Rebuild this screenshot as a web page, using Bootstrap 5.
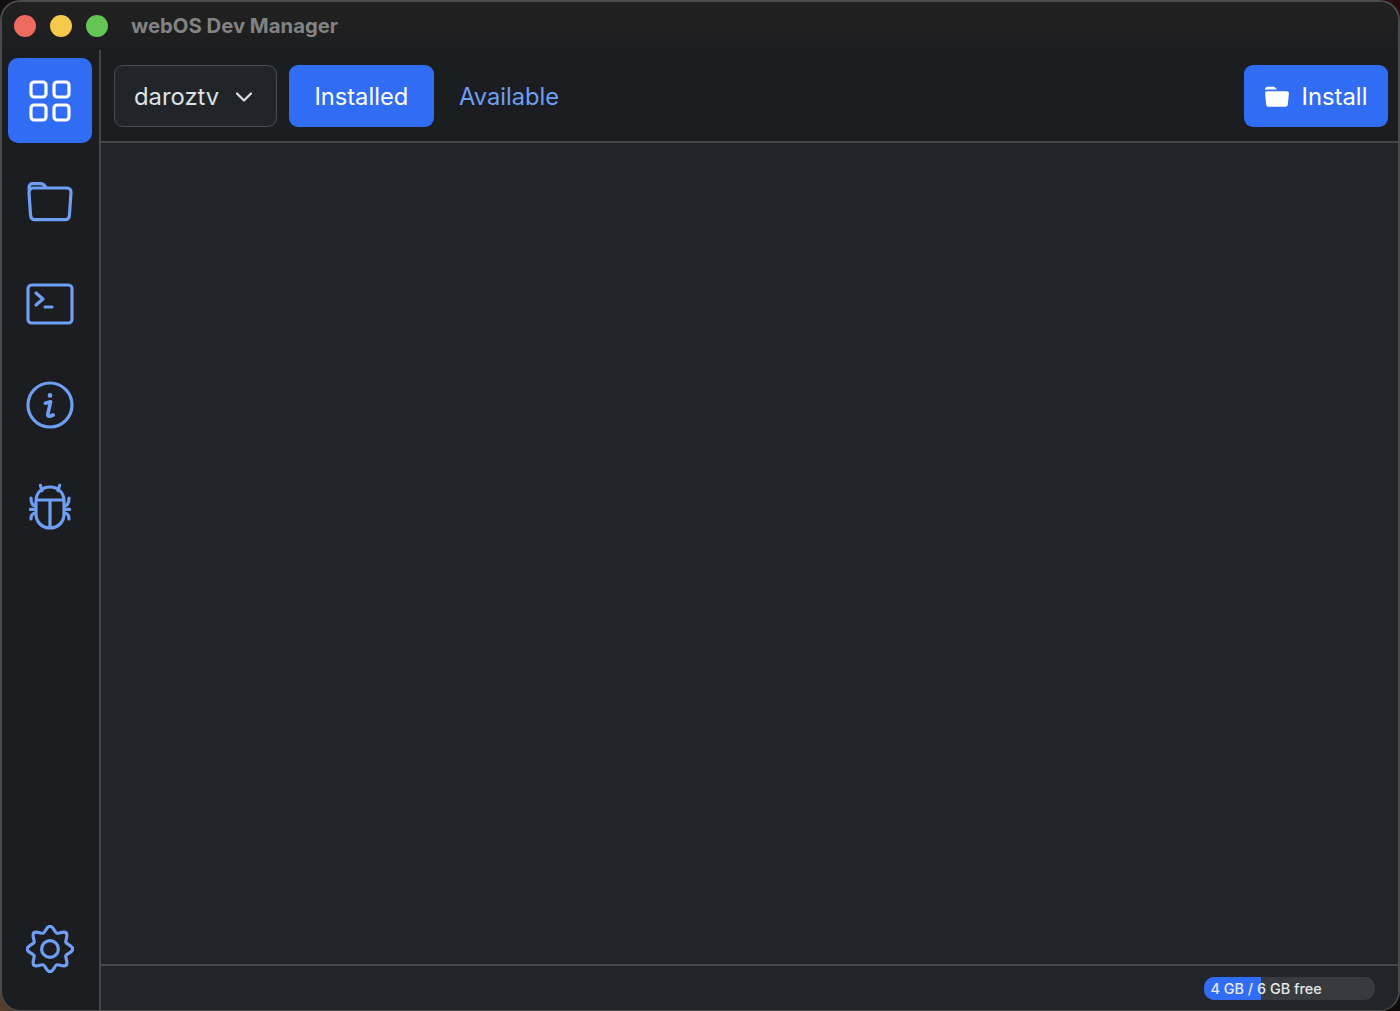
<!DOCTYPE html>
<html lang="en" data-bs-theme="dark">
<head>
  <meta charset="UTF-8" />
  <title>webOS Dev Manager</title>
  <link rel="stylesheet" href="https://cdn.jsdelivr.net/npm/bootstrap@5.3.0/dist/css/bootstrap.min.css" />
  <style>
    html, body { height: 100%; }
    body {
      background: linear-gradient(45deg, #5a4030 0, #2a211c 3%, #0c0a0a 50%, #2a0c10 100%);
      font-family: Inter, "Liberation Sans", sans-serif;
      overflow: hidden;
    }
    .app-window {
      width: 1400px;
      height: 1011px;
      background: #1b1d20;
      border: 2px solid #4a4b4c;
      border-bottom-width: 1px;
      border-radius: 20px;
      overflow: hidden;
    }
    .title-bar {
      height: 48px;
      flex: none;
      padding-left: 12px;
      background: linear-gradient(#212121, #1d1e20);
    }
    .traffic { width: 22px; height: 22px; border-radius: 50%; margin-right: 14px; }
    .traffic-red { background: #ee6a5f; }
    .traffic-yellow { background: #f5c94a; }
    .traffic-green { background: #62c554; }
    .title-text { margin-left: 9px; font-size: 20.3px; font-weight: 700; color: #838383; }

    .sidebar { width: 99px; flex: none; border-right: 2px solid #43474b; padding: 8px 7px 0 6px; }
    .side-link {
      height: 85px;
      margin-bottom: 16.5px;
      border-radius: 10px;
      color: #6f9ff5;
    }
    .side-link.active { background: #316cf4; color: #fff; }
    .side-link svg { width: 48px; height: 48px; fill: none; stroke: currentColor; stroke-width: 1.6; stroke-linecap: round; stroke-linejoin: round; }
    .side-link.side-bottom { margin-bottom: 19px; }

    .tool-bar { height: 93px; flex: none; padding: 15px 10px 0 13px; background: #1b1d20; border-bottom: 2px solid #43474b; }
    .device-select {
      width: 163px;
      height: 62px;
      padding: 1px 22px 0 19px;
      background: #212529;
      border: 1.5px solid #4a4e53;
      border-radius: 9px;
      color: #dee2e6;
      font-size: 23.8px;
    }
    .device-select svg { width: 20px; height: 20px; fill: none; stroke: #dee2e6; stroke-width: 2.2; stroke-linecap: round; stroke-linejoin: round; }
    .nav-pills { margin-left: 12px; }
    .nav-pills .nav-link {
      height: 62px;
      padding: 1px 25.4px 0;
      font-size: 23.7px;
      line-height: 62px;
      border-radius: 9px;
      color: #6f9ff5;
    }
    .nav-pills .nav-link.active { background: #316cf4; color: #fff; }
    .btn-install {
      height: 62px;
      width: 144px;
      padding: 1px 1px 0 0;
      gap: 12px;
      background: #316cf4;
      border: 0;
      border-radius: 9px;
      font-size: 23.8px;
      color: #fff;
    }
    .btn-install svg { width: 26px; height: 26px; fill: #fff; }

    .content-area { background: #212529; }
    .status-bar { height: 46px; flex: none; padding: 11px 23px 0 0; background: #212529; border-top: 2px solid #43474b; }
    .storage {
      width: 171px;
      height: 23px;
      background: #373b3f;
      border-radius: 10px;
    }
    .storage .progress-bar { background: #316cf4; }
    .storage-label {
      left: 6.500px;
      top: 0;
      line-height: 24px;
      font-size: 14.4px;
      font-weight: 500;
      color: #e6e8ea;
      white-space: nowrap;
    }
  </style>
</head>
<body>
  <div class="app-window d-flex flex-column">
    <div class="title-bar d-flex align-items-center">
      <span class="traffic traffic-red"></span>
      <span class="traffic traffic-yellow"></span>
      <span class="traffic traffic-green"></span>
      <span class="title-text">webOS Dev Manager</span>
    </div>

    <div class="d-flex flex-grow-1 overflow-hidden">
      <nav class="sidebar d-flex flex-column">
        <a class="side-link active d-flex align-items-center justify-content-center" href="#">
          <svg viewBox="0 0 24 24"><rect x="2.5" y="2.5" width="7.5" height="7.5" rx="1.6"/><rect x="14" y="2.5" width="7.5" height="7.5" rx="1.6"/><rect x="2.5" y="14" width="7.5" height="7.5" rx="1.6"/><rect x="14" y="14" width="7.5" height="7.5" rx="1.6"/></svg>
        </a>
        <a class="side-link d-flex align-items-center justify-content-center" href="#">
          <svg viewBox="0 0 24 24"><path d="M1.700 6.800L1.500 4.700C1.500 3.500 2.300 2.800 3.400 2.800H7.300C8 2.800 8.500 3 9 3.500L10.300 5H20.400C21.800 5 22.700 6 22.500 7.300L21.700 18.800C21.600 20 20.700 20.800 19.600 20.800H4.400C3.300 20.800 2.400 20 2.300 18.800L1.500 7.300C1.400 6 2.300 5 3.600 5H10.300"/></svg>
        </a>
        <a class="side-link d-flex align-items-center justify-content-center" href="#">
          <svg viewBox="0 0 24 24"><rect x="1" y="2.500" width="22" height="19" rx="1.800"/><path d="M5 6.500l3.500 3-3.500 3M9.500 13.500h3.500"/></svg>
        </a>
        <a class="side-link d-flex align-items-center justify-content-center" href="#">
          <svg viewBox="0 0 24 24"><circle cx="12" cy="12" r="11"/><circle cx="12" cy="7.200" r=".7" fill="currentColor" stroke-width="1"/><path d="M9.700 11.100L12.300 10.400L10.900 16.600C10.700 17.700 11.700 17.900 13.600 17" stroke-width="1.800"/></svg>
        </a>
        <a class="side-link d-flex align-items-center justify-content-center" href="#">
          <svg viewBox="0 0 24 24"><path d="M12 2C7.800 2 5 5 5 9v6.500C5 19.500 8 22.500 12 22.500s7-3 7-7V9C19 5 16.200 2 12 2zM5 8.500h14M12 8.500V22.500M8 3.800L7.200 1.200M16 3.800L16.800 1.200M5 11.500C3.500 11.500 2.500 10 2.500 7.500M19 11.500C20.500 11.500 21.500 10 21.500 7.500M5 13.200H2.200M19 13.200h2.800M5 15C3.500 15 2.500 16 2.500 18M19 15c1.500 0 2.500 1 2.500 3"/></svg>
        </a>
        <a class="side-link side-bottom d-flex align-items-center justify-content-center mt-auto" href="#">
          <svg viewBox="0 0 24 24">
            <circle cx="12" cy="12" r="4.200"/>
            <path id="gear-lobe" d="M12 .6C13.700 .6 14.275 3.634 15.291 4.055C16.307 4.476 18.859 2.737 20.061 3.939"/>
            <use href="#gear-lobe" transform="rotate(45 12 12)"/>
            <use href="#gear-lobe" transform="rotate(90 12 12)"/>
            <use href="#gear-lobe" transform="rotate(135 12 12)"/>
            <use href="#gear-lobe" transform="rotate(180 12 12)"/>
            <use href="#gear-lobe" transform="rotate(225 12 12)"/>
            <use href="#gear-lobe" transform="rotate(270 12 12)"/>
            <use href="#gear-lobe" transform="rotate(315 12 12)"/>
          </svg>
        </a>
      </nav>

      <main class="d-flex flex-column flex-grow-1">
        <div class="tool-bar d-flex align-items-start">
          <div class="device-select d-flex align-items-center justify-content-between">
            <span>daroztv</span>
            <svg viewBox="0 0 20 20"><path d="M3 6.500l7 7 7-7"/></svg>
          </div>
          <ul class="nav nav-pills">
            <li class="nav-item"><a class="nav-link active" href="#">Installed</a></li>
            <li class="nav-item"><a class="nav-link" href="#">Available</a></li>
          </ul>
          <button class="btn btn-install d-flex align-items-center justify-content-center ms-auto" type="button">
            <svg viewBox="0 0 24 24"><path d="M1 5.500C1 3.600 2 2.500 3.500 2.500h5c.8 0 1.400.3 2 .9L12 5H3c-.8 0-1.400.2-2 .7zM1 8.500c0-1 .8-1.700 1.800-1.700h18.400c1 0 1.800.7 1.800 1.700L22 19c-.1 1.200-1 2-2.200 2H4.200C3 21 2.100 20.200 2 19z"/></svg>
            <span>Install</span>
          </button>
        </div>
        <div class="content-area flex-grow-1"></div>
        <div class="status-bar d-flex justify-content-end">
          <div class="storage progress position-relative">
            <div class="progress-bar" style="width: 33.3%"></div>
            <span class="storage-label position-absolute">4 GB / 6 GB free</span>
          </div>
        </div>
      </main>
    </div>
  </div>
  <script src="https://cdn.jsdelivr.net/npm/bootstrap@5.3.0/dist/js/bootstrap.bundle.min.js"></script>
</body>
</html>
